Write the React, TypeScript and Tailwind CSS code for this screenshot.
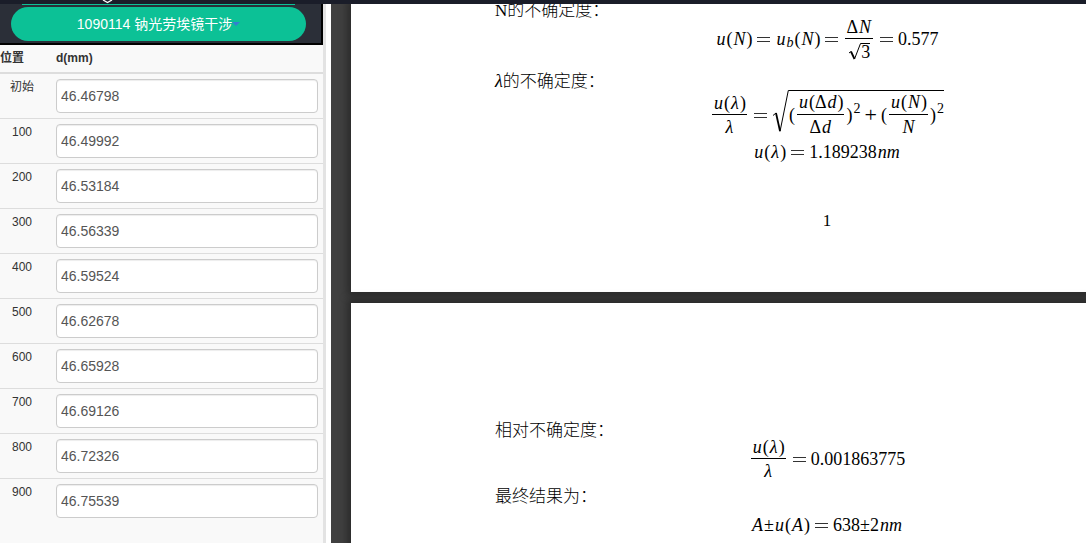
import type { ReactNode } from "react";

const readings = [
  { position: "初始", value: "46.46798" },
  { position: "100", value: "46.49992" },
  { position: "200", value: "46.53184" },
  { position: "300", value: "46.56339" },
  { position: "400", value: "46.59524" },
  { position: "500", value: "46.62678" },
  { position: "600", value: "46.65928" },
  { position: "700", value: "46.69126" },
  { position: "800", value: "46.72326" },
  { position: "900", value: "46.75539" },
];

function ReadingsTable() {
  return (
    <table className="w-full table-fixed border-collapse text-[12px] leading-4 text-[#333]">
      <thead>
        <tr className="h-7 border-b-2 border-[#ddd] text-left">
          <th className="w-11 p-0 pb-[2px] font-bold">位置</th>
          <th className="p-0 pb-[2px] pl-3 font-bold">d(mm)</th>
        </tr>
      </thead>
      <tbody>
        {readings.map((r, i) => (
          <tr key={r.position} className="border-b border-[#ddd] last:border-b-0">
            <td className="p-0 pt-[5px] text-center align-top">
              <label htmlFor={`reading-${i}`}>{r.position}</label>
            </td>
            <td className="py-[5px] pr-[5px] pl-3">
              <input
                id={`reading-${i}`}
                defaultValue={r.value}
                className="block h-[34px] w-full rounded border border-[#ccc] bg-white px-1 text-[14px] text-[#555] shadow-[inset_0_1px_1px_rgba(0,0,0,0.075)] outline-none"
              />
            </td>
          </tr>
        ))}
      </tbody>
    </table>
  );
}

function Sidebar() {
  return (
    <aside className="flex w-[326px] shrink-0 flex-col overflow-hidden border-r-[3px] border-[#e3e3e3] bg-[#f9f9f9] font-['Liberation_Sans','Noto_Sans_CJK_SC',sans-serif]">
      <div className="flex flex-col gap-[2px] border-r-2 border-b-2 border-black bg-[#2b2f38] pr-[15px] pb-[2px] pl-[11px]">
        <div className="mx-[11px] h-px bg-[#0cc196]" />
        <button
          type="button"
          className="flex h-[34px] items-center justify-center rounded-full bg-[#0cc196] text-[14px] text-white"
        >
          1090114 钠光劳埃镜干涉
          <span className="h-0 w-0 border-x-4 border-t-4 border-x-transparent border-t-[#337fd0]" />
        </button>
      </div>
      <ReadingsTable />
    </aside>
  );
}

const V = ({ children }: { children: ReactNode }) => <i className="px-px">{children}</i>;

const Rel = ({ children }: { children: ReactNode }) => <span className="px-1 text-[22px]">{children}</span>;

const Squared = () => <sup className="static pb-3 pl-px text-[14px]">2</sup>;

function Equals() {
  return (
    <svg className="mx-[5px] h-[5px] w-[13px] shrink-0" viewBox="0 0 13 5" role="img" aria-label="=">
      <path d="M0 .5h13M0 4.500h13" stroke="#333" strokeWidth="1" />
    </svg>
  );
}

function Frac({ top, bottom }: { top: ReactNode; bottom: ReactNode }) {
  return (
    <span className="mx-[2px] inline-flex flex-col items-stretch text-center">
      <span className="flex h-5 items-center justify-center border-b border-black px-px pb-1">{top}</span>
      <span className="flex h-5 items-center justify-center pt-1">{bottom}</span>
    </span>
  );
}

function Equation({ className, children }: { className: string; children: ReactNode }) {
  return <div className={`flex items-center justify-center text-[18px] whitespace-nowrap ${className}`}>{children}</div>;
}

function Para({ className = "", children }: { className?: string; children: ReactNode }) {
  return <p className={`h-6 leading-[26px] font-light ${className}`}>{children}</p>;
}

function Sheet({ className, children }: { className: string; children: ReactNode }) {
  return (
    <section
      className={`w-[952px] shrink-0 bg-white px-36 text-[17px] leading-5 text-black shadow-[0_0_8px_4px_rgba(0,0,0,0.35)] ${className}`}
    >
      {children}
    </section>
  );
}

function Viewer() {
  return (
    <main className="flex min-w-0 flex-1 flex-col gap-[11px] overflow-hidden bg-[#404040] pl-5 font-['Liberation_Serif','Noto_Sans_CJK_SC',serif]">
      <Sheet className="h-[288px]">
        <Para className="-mt-[6px]">N的不确定度：</Para>
        <Equation className="h-[34px]">
          <V>u</V>(<V>N</V>)<Equals />
          <V>u</V>
          <sub className="pr-px text-[14px]">
            <i>b</i>
          </sub>
          (<V>N</V>)<Equals />
          <Frac
            top={<>Δ<V>N</V></>}
            bottom={
              <>
                <svg className="h-[17px] w-[13px]" viewBox="0 0 13 17" fill="none" stroke="#000">
                  <path d="M1 10l2-1.5" strokeWidth="1" />
                  <path d="M3 8.5l3.500 7.500" strokeWidth="1.800" />
                  <path d="M6.500 16L12.500 .5H13" strokeWidth="1" />
                </svg>
                <span className="h-[17px] border-t border-black leading-[17px]">3</span>
              </>
            }
          />
          <Equals />
          0.577
        </Equation>
        <Para className="mt-3">
          <i className="text-[18px] font-normal">λ</i>的不确定度：
        </Para>
        <Equation className="-mt-[2px] h-[42px]">
          <span className="flex h-full items-center pt-2">
            <Frac top={<><V>u</V>(<V>λ</V>)</>} bottom={<V>λ</V>} />
            <Equals />
          </span>
          <svg className="h-[42px] w-[17px] shrink-0" viewBox="0 0 17 42" fill="none" stroke="#000">
            <path d="M1 25.500l3-2.500" strokeWidth="1" />
            <path d="M4 23l4 18" strokeWidth="1.800" />
            <path d="M8 41.500L16.300 .5H17" strokeWidth="1" />
          </svg>
          <span className="flex h-[42px] items-center border-t border-black pt-[6px]">
            (<Frac top={<><V>u</V>(Δ<V>d</V>)</>} bottom={<>Δ<V>d</V></>} />)
            <Squared />
            <Rel>+</Rel>
            (<Frac top={<><V>u</V>(<V>N</V>)</>} bottom={<V>N</V>} />)
            <Squared />
          </span>
        </Equation>
        <Equation className="mt-2 h-6">
          <V>u</V>(<V>λ</V>)<Equals />
          1.189238<V>nm</V>
        </Equation>
        <p className="mt-11 h-6 text-center leading-[26px]">1</p>
      </Sheet>
      <Sheet className="min-h-[288px] pt-[115px]">
        <Para>相对不确定度：</Para>
        <Equation className="h-[34px]">
          <Frac top={<><V>u</V>(<V>λ</V>)</>} bottom={<V>λ</V>} />
          <Equals />
          0.001863775
        </Equation>
        <Para className="mt-2">最终结果为：</Para>
        <Equation className="mt-[5px] h-6">
          <V>A</V>±<V>u</V>(<V>A</V>)<Equals />
          638±2<V>nm</V>
        </Equation>
      </Sheet>
    </main>
  );
}

export default function App() {
  return (
    <div className="flex h-screen flex-col overflow-hidden bg-white">
      <header className="h-1 shrink-0 bg-[#1a1d29]">
        <svg className="ml-[102px] h-1 w-[11px]" viewBox="0 0 11 4" fill="none" stroke="#fff" strokeWidth="1.300">
          <path d="M1 0l4.500 2.500L10 0" />
        </svg>
      </header>
      <div className="flex min-h-0 flex-1 gap-[5px]">
        <Sidebar />
        <Viewer />
      </div>
    </div>
  );
}
